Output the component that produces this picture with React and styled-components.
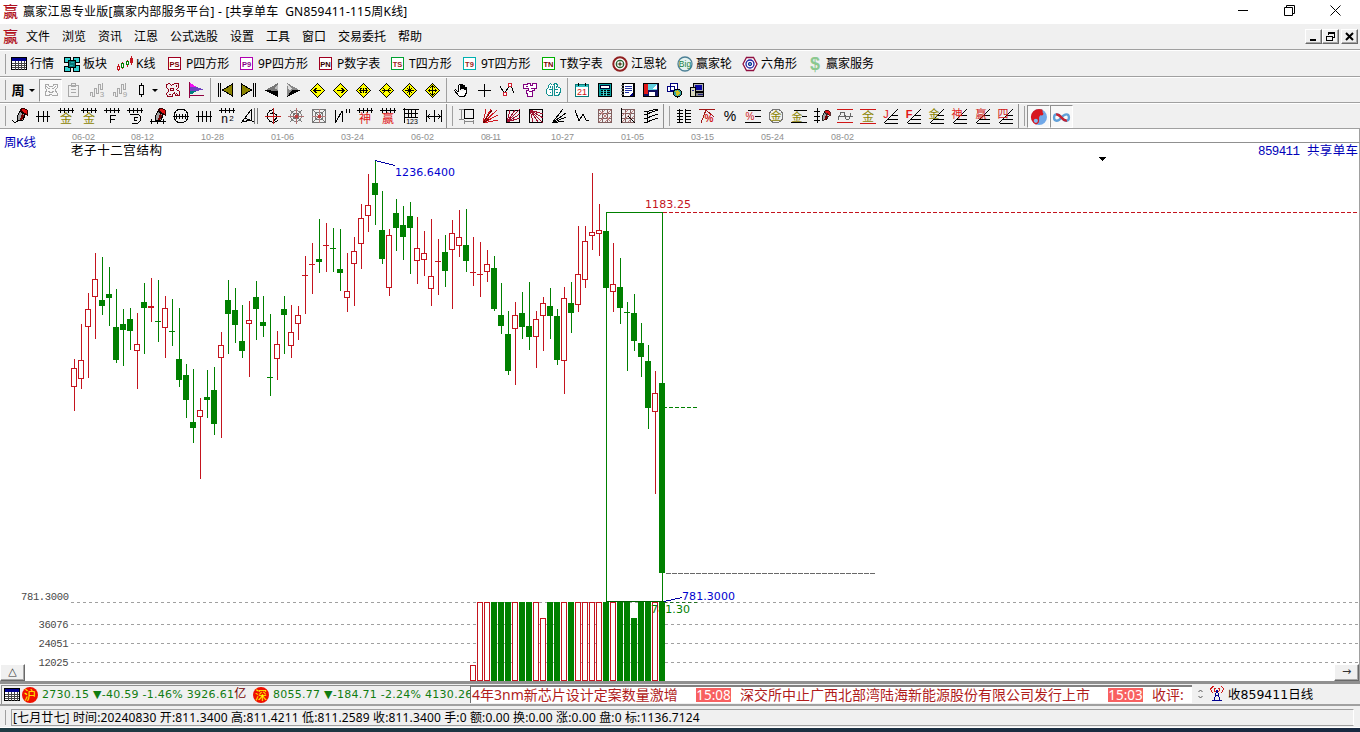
import React from "react";
import styled, { createGlobalStyle, css } from "styled-components";

//!데이터: [wickTop, wickBottom, bodyTop, bodyBottom, color]
const candles = [
  [359, 411, 368, 387, "r"], [324, 389, 360, 379, "r"], [293, 378, 309, 327, "r"],
  [253, 339, 279, 297, "r"], [257, 315, 300, 306, "g"], [267, 326, 294, 298, "g"],
  [289, 363, 327, 360, "g"], [309, 366, 324, 330, "g"], [308, 350, 319, 331, "g"],
  [313, 389, 344, 351, "r"], [283, 354, 302, 308, "g"], [278, 322, 306, 308, "r"],
  [280, 342, 321, 322, "g"], [296, 358, 308, 328, "r"], [299, 346, 331, 332, "g"],
  [308, 387, 359, 380, "g"], [364, 418, 375, 400, "g"], [369, 443, 422, 428, "g"],
  [398, 479, 410, 417, "r"], [370, 418, 397, 400, "g"], [367, 435, 390, 424, "g"],
  [332, 438, 345, 358, "r"], [280, 354, 300, 314, "g"], [288, 343, 310, 325, "g"],
  [305, 358, 341, 351, "g"], [301, 377, 320, 324, "r"], [281, 340, 297, 309, "g"],
  [296, 337, 322, 326, "g"], [314, 396, 377, 378, "g"], [331, 380, 344, 359, "r"],
  [296, 354, 309, 315, "g"], [305, 358, 332, 346, "r"], [306, 340, 315, 324, "r"],
  [256, 314, 275, 276, "r"], [243, 294, 264, 265, "r"], [219, 273, 259, 262, "g"],
  [223, 272, 245, 246, "r"], [228, 272, 248, 249, "g"], [229, 291, 269, 273, "g"],
  [253, 312, 291, 298, "r"], [237, 306, 251, 264, "r"], [204, 269, 218, 244, "r"],
  [174, 232, 205, 216, "r"], [160, 225, 183, 195, "g"], [191, 264, 230, 259, "g"],
  [229, 296, 235, 288, "r"], [199, 251, 213, 228, "g"], [206, 260, 225, 237, "g"],
  [202, 274, 216, 228, "g"], [217, 284, 248, 261, "r"], [231, 276, 253, 260, "r"],
  [219, 306, 276, 289, "r"], [239, 295, 261, 262, "r"], [235, 287, 252, 271, "g"],
  [220, 309, 233, 250, "r"], [210, 257, 237, 246, "r"], [209, 272, 245, 261, "g"],
  [237, 286, 272, 273, "r"], [242, 297, 274, 275, "r"], [250, 282, 264, 272, "r"],
  [256, 311, 268, 309, "g"], [283, 334, 315, 326, "g"], [311, 375, 334, 371, "g"],
  [302, 385, 315, 329, "r"], [292, 339, 313, 327, "g"], [282, 350, 326, 337, "g"],
  [311, 368, 319, 337, "r"], [297, 351, 303, 316, "r"], [288, 339, 306, 316, "g"],
  [309, 365, 316, 360, "g"], [287, 394, 298, 361, "r"], [282, 333, 303, 313, "g"],
  [226, 312, 274, 305, "r"], [226, 288, 241, 280, "r"], [173, 250, 232, 236, "r"],
  [204, 256, 230, 234, "r"], [231, 288, 231, 288, "g"], [243, 312, 284, 292, "r"],
  [258, 324, 287, 308, "g"], [302, 371, 312, 313, "g"], [294, 351, 313, 341, "g"],
  [323, 377, 343, 357, "g"], [345, 429, 361, 408, "g"], [371, 494, 393, 412, "r"],
  [383, 573, 383, 573, "g"],
];

const volumeColors = "rrrgggrggrrggrgrrrrgrgggggrg".split("");
const volumeTops = { 0: 665, 10: 618, 23: 618 };

const dates = [
  [72, "06-02"], [131, "08-12"], [201, "10-28"], [271, "01-06"], [341, "03-24"],
  [411, "06-02"], [481, "08-11"], [551, "10-27"], [621, "01-05"], [691, "03-15"],
  [761, "05-24"], [831, "08-02"],
];

const menus = [
  ["文件", 36], ["浏览", 36], ["资讯", 36], ["江恩", 36], ["公式选股", 60],
  ["设置", 36], ["工具", 36], ["窗口", 36], ["交易委托", 60], ["帮助", 36],
];

const RED = "#c4141e";
const GREEN = "#008000";
const OLIVE = "#8c8400";

//!아이콘 조각
const P = ({ d, c = "#000", f = "none", w = 1 }) => (
  <path d={d} stroke={c} fill={f} strokeWidth={w} />
);
const T = ({ x = 8, y = 15, s = 10, c = "#000", b, children }) => (
  <text
    x={x}
    y={y}
    fontSize={s}
    fill={c}
    textAnchor="middle"
    fontWeight={b ? 700 : 400}
    fontFamily='"Liberation Sans", "Noto Sans CJK SC", sans-serif'
  >
    {children}
  </text>
);

const Ladder = () => <P d="M0 2.5H16M2.5 0V5M6.5 0V5M10.5 0V5M14.5 0V5" />;
const Fan = () => <P d="M2 15.5H15M5 11.5H15M9 7.5H15M1 15L15 1" />;
const Diamond = ({ d }) => (
  <>
    <path d="M8.5 1.5L15.5 8.5L8.5 15.5L1.5 8.5Z" fill="#ff0" stroke="#000" />
    <P d={d} />
  </>
);
const Letters = ({ c, tc, children }) => (
  <>
    <rect x="1.5" y="1.5" width="12" height="12" fill="#fff" stroke={c} />
    <T x={7.5} y={10.5} s={7.5} c={tc} b>
      {children}
    </T>
  </>
);
const Brush = () => (
  <>
    <path d="M8 2L11 0L15 2L15 7L12 5Z" fill="#e01010" stroke="#300" />
    <path d="M8 3L13 7L11 12L5 13L5 9Z" fill="#a0a0a0" stroke="#000" />
    <path d="M10 5L12 8L10 12L8 12Z" fill="#700" />
  </>
);

const icons = {
  table: (
    <>
      <rect x="0.5" y="1.5" width="15" height="12" fill="#fff" stroke="#000" />
      <rect x="1" y="2" width="14" height="3" fill="#000090" />
      <P d="M1 7.5H15M1 9.5H15M1 11.5H15M4.5 5V14M7.5 5V14M10.5 5V14M13.5 5V14" c="#444" />
    </>
  ),
  blocks: (
    <>
      <P d="M0.5 1.5H6.5V6.5H0.5ZM9.5 1.5H15.5V6.5H9.5ZM0.5 10.5H6.5V15.5H0.5ZM9.5 9.5H15.5V15.5H9.5Z" f="#30d0d0" />
      <P d="M4.5 4.5H11.5V11.5H4.5Z" f="#087878" />
      <P d="M7 6.5H10M6 9.5H9" c="#20b0b0" />
    </>
  ),
  kline: (
    <>
      <P d="M1.5 8V15M5.5 6V13M10.5 4V11" c={RED} />
      <P d="M0.5 10.5H2.5V13.5H0.5ZM14.5 0V9M13.5 2.5H15.5V6.5H13.5Z" c={RED} f="#fff" />
      <P d="M4.5 7.5H6.5V11.5H4.5ZM9.5 5.5H11.5V8.5H9.5Z" c={GREEN} f="#fff" />
    </>
  ),
  ps: <Letters c="#a00020" tc="#700">PS</Letters>,
  p9: <Letters c="#b000b0" tc="#808">P9</Letters>,
  pn: <Letters c="#a00020" tc="#300">PN</Letters>,
  ts: <Letters c="#00a030" tc="#a02020">TS</Letters>,
  t9: <Letters c="#00b0b0" tc="#a02020">T9</Letters>,
  tn: <Letters c="#00b000" tc="#700">TN</Letters>,
  wheel: (
    <g shapeRendering="auto">
      <circle cx="8" cy="8" r="6.7" fill="#fff" stroke="#902020" strokeWidth="2" />
      <circle cx="8" cy="8" r="3.7" fill="#fff" stroke="#286030" strokeWidth="1.3" />
      <circle cx="8" cy="8" r="1.5" fill="#a03030" />
      <P d="M8 4V12M4 8H12" c="#286030" w={0.6} />
    </g>
  ),
  big: (
    <g shapeRendering="auto">
      <circle cx="8" cy="8" r="7" fill="#e4f2f0" stroke="#4c8096" strokeWidth="1.3" />
      <T y={11} s={8.5} c="#208040">Big</T>
    </g>
  ),
  hex: (
    <g shapeRendering="auto">
      <path d="M4.5 1.5H11.5L15 8L11.5 14.5H4.5L1 8Z" fill="#fff" stroke="#901040" strokeWidth="1.3" />
      <circle cx="8" cy="8" r="4" fill="none" stroke="#2020a0" strokeWidth="1.3" />
      <circle cx="8" cy="8" r="1.7" fill="#50b0b0" stroke="#2020a0" />
    </g>
  ),
  dollar: <T y={14} s={18} c="#8cc890" b>$</T>,
  week: <T y={13} s={13} b>周</T>,
  mask: <P c="#a8a8a8" d="M2 2.5H5L6 4H10L11 2.5H14V6L12 8L14 11V13.5H10L8 12L6 13.5H2V11L4 8L2 6ZM5 6.5H7M9 6.5H11M5 9L8 11L11 9M3 4L6 7M13 4L10 7" />,
  clip: <P c="#a8a8a8" d="M2.5 3.5H12.5V14.5H2.5ZM5.5 1.5H9.5V4.5H5.5ZM5 7.5H10M5 10.5H10" />,
  zig3: (
    <>
      <P c="#a8a8a8" d="M1.5 14V10.5H3.5V14H5.5V6.5H7.5V11H9.5V2.5H11.5V7.5H13.5V1" />
      <T x={13} y={15} s={8} c="#a0a0a0">3</T>
    </>
  ),
  zig9: (
    <>
      <P c="#a8a8a8" d="M1.5 14V10.5H3.5V14H5.5V6.5H7.5V11H9.5V2.5H11.5V7.5H13.5V1" />
      <T x={13} y={15} s={8} c="#a0a0a0">9</T>
    </>
  ),
  candle: <P d="M8.5 1V4M8.5 12V15M6.5 3.5H10.5V12.5H6.5Z" />,
  maze: <P c="#900018" d="M1.5 2.5L4.5 1.5L6.5 3.5L9.5 1.5H13.5V5.5L11.5 7.5L14.5 9.5V13.5H10.5L9.5 10.5L7.5 12.5V14.5H2.5L1.5 11.5L3.5 9.5V7.5L1.5 5.5ZM5.5 6.5H8.5V8.5H5.5ZM11.5 3V5M4 12H6M11 11L13 13" />,
  flag: (
    <>
      <path d="M2 1L9 5H2Z" fill="#f010f0" />
      <path d="M2 5H9L15 7.5L9 9H2Z" fill="#7040c0" />
      <path d="M2 9H9L4 12H2Z" fill="#008080" />
      <P d="M1.5 0V16M1 13.5H16" c="#900040" />
    </>
  ),
  first: <P d="M1.5 1V15M3.5 1V15M15.5 2V14L5.5 8Z" f={OLIVE} />,
  last: <P d="M15.5 1V15M13.5 1V15M1.5 2V14L11.5 8Z" f={OLIVE} />,
  prev: (
    <>
      <path d="M15 1V15L9 9H1Z" fill="#777" />
      <path d="M15 15V9L1 8Z" fill="#000" />
      <path d="M11 6L15 2V8Z" fill="#bbb" />
    </>
  ),
  next: (
    <>
      <path d="M1 1V15L7 9H15Z" fill="#888" />
      <path d="M1 15L6 8H15Z" fill="#000" />
      <path d="M1 2L7 7L3 8Z" fill="#ddd" />
    </>
  ),
  dLeft: <Diamond d="M5 8.5H12M7.5 6L5 8.5L7.5 11" />,
  dRight: <Diamond d="M5 8.5H12M9.5 6L12 8.5L9.5 11" />,
  dWide: <Diamond d="M4 8.5H13M6.5 6L4.5 8.5L6.5 11M10.5 6L12.5 8.5L10.5 11M8.5 6V11" />,
  dNarrow: <Diamond d="M4 8.5H13M5 6L7.5 8.5L5 11M12 6L9.5 8.5L12 11" />,
  dStar: <Diamond d="M4 8.5H13M8.5 4V13M6 6L11 11M11 6L6 11" />,
  dCross: <Diamond d="M4 8.5H13M8.5 3V14M6 6L8.5 4L11 6M6 11L8.5 13L11 11M5.5 7V10M11.5 7V10" />,
  hand: <P d="M5.5 10L2.5 7.5L1.5 8.5L6.5 14.5H11.5L13.5 10.5V5.5H12.5V8M11.5 8V3.5H10.5V7M9.5 7V2.5H8.5V7M7.5 8V2.5H6.5L5.5 4V10" f="#fff" />,
  cross: <P d="M8.5 2V15M2 8.5H15" />,
  nodes: (
    <>
      <P d="M1 4L5 11M6 11L10 4M12 4L15 11" />
      <P d="M4.5 10.5H7.5V13.5H4.5ZM9.5 1.5H12.5V4.5H9.5Z" c="#d02030" f="#fff" />
    </>
  ),
  shirt: <P c="#800080" d="M1.5 2.5H5.5V1.5H8.5V3.5H10.5V1.5H14.5V6.5H12.5V8.5H10.5V14.5H5.5V11.5H4.5V8.5H6.5V6.5H1.5ZM4 4.5H6M9 6.5H13M7 9.5H10" f="#fff" />,
  brain: <P c="#109090" d="M7.5 3.5L5.5 1.5L3.5 3.5V5.5L1.5 7.5V11.5L3.5 13.5H7.5V3.5M8.5 2.5L10.5 1.5L12.5 2.5V4.5L15.5 6.5V9.5L14.5 11.5L13.5 13.5H9.5V2.5M4 7.5H7M10 7.5H13M4.5 10.5H6M11 10.5H13M5.5 4V6M11.5 4V6" f="#fff" />,
  calendar: (
    <>
      <rect x="1.5" y="2.5" width="13" height="12" fill="#fff" stroke="#087878" />
      <rect x="2" y="3" width="12" height="2" fill="#30c0c0" />
      <P d="M4.5 1V4M11.5 1V4" />
      <T y={13} s={9} c="#d01010">21</T>
    </>
  ),
  calculator: (
    <>
      <rect x="1.5" y="1.5" width="13" height="13" fill="#08a0a0" stroke="#000" />
      <rect x="3.5" y="3.5" width="9" height="3" fill="#fff" stroke="#003" />
      <P d="M4 8.5H13M4 10.5H13M4 12.5H13" />
      <P d="M6.5 8V14M9.5 8V14" c="#60d8d8" />
    </>
  ),
  notebook: (
    <>
      <rect x="2" y="1" width="13" height="14" fill="#000" />
      <rect x="4" y="2" width="9" height="12" fill="#fff" />
      <P d="M5 4.5H12M5 6.5H12M5 8.5H12M5 10.5H9" c="#2030a0" />
      <P d="M1 3.5H4M1 6.5H4M1 9.5H4M1 12.5H4" c="#777" />
      <path d="M9 14L13 10V14Z" fill="#000080" />
    </>
  ),
  disk: (
    <>
      <rect x="0.5" y="1.5" width="15" height="13" fill="#101060" stroke="#000" />
      <rect x="1" y="2" width="4" height="10" fill="#e01818" />
      <rect x="5" y="2" width="9" height="6" fill="#60d0e0" />
      <path d="M9 7L14 2V7Z" fill="#fff" />
      <rect x="6" y="10" width="6" height="4" fill="#fff" />
    </>
  ),
  globe: (
    <>
      <P d="M4.5 1.5H11.5V8.5H4.5ZM1.5 4.5H8.5V9.5H1.5Z" c="#000080" f="#fff" />
      <circle cx="11.5" cy="11" r="4" fill="#30a0a0" stroke="#000" />
      <path d="M9 9L12 8L14 11L11 14Z" fill="#d0c020" />
    </>
  ),
  pc: (
    <>
      <rect x="4.5" y="1.5" width="10" height="8" fill="#b0b0b0" stroke="#000" />
      <rect x="6" y="3" width="7" height="5" fill="#0808a0" />
      <P d="M1.5 5.5H6.5V14.5H1.5Z" f="#d8d8c0" />
      <P d="M6.5 10.5H14.5V14.5H6.5Z" f="#888" />
      <P d="M3 8.5H5M9 12.5H14" c="#202080" />
    </>
  ),
  brush: (
    <>
      <Brush />
      <P d="M0 12L3 15L7 12" />
    </>
  ),
  rail: <P d="M1 8.5H15M3.5 3V14M8.5 3V14M12.5 3V14" />,
  gold: (
    <>
      <Ladder />
      <T c={OLIVE} s={12}>金</T>
    </>
  ),
  railF: (
    <>
      <Ladder />
      <P d="M6.5 15V7.5H12M6.5 11.5H11" />
    </>
  ),
  spiral: (
    <>
      <Ladder />
      <P d="M3 6.5H11.5L13.5 8.5V12.5L10.5 15.5H5M10.5 9.5H8L7.5 12.5H10" />
    </>
  ),
  brushRail: (
    <>
      <Brush />
      <P d="M0 13.5H16M1.5 11V16M7.5 12V16M13.5 11V16" />
    </>
  ),
  roundRail: (
    <>
      <circle cx="8" cy="8" r="7" fill="none" stroke="#000" />
      <P d="M0 8.5H16M3.5 6V11M6.5 6V11M9.5 6V11M12.5 6V11" />
    </>
  ),
  rail4: <P d="M0 8.5H16M2.5 3V14M6.5 3V14M10.5 3V14M14.5 3V14" />,
  n2: (
    <>
      <Ladder />
      <T x={5.5} y={15} s={12}>n</T>
      <T x={12.5} y={13} s={8}>2</T>
    </>
  ),
  prism: (
    <>
      <P d="M0 14L9 2V12ZM3 10L12 14" />
      <P d="M12.5 0V16M15.5 0V16" c="#777" />
    </>
  ),
  target: (
    <>
      <P d="M8 1.5L4.5 3L2.5 6V10L5 13.5L9 14.5L13 12.5M5.5 6L8.5 4.5L11.5 7V10L9 12.5" />
      <P d="M0 8.5H16M8.5 0V16" c="#c01818" />
    </>
  ),
  web: (
    <>
      <circle cx="8" cy="8" r="5.5" fill="none" stroke="#888" />
      <circle cx="8" cy="8" r="3" fill="none" stroke="#707070" />
      <P d="M2 2L14 14M14 2L2 14" c="#777" />
      <P d="M0 8.5H16M8.5 0V16" c="#b07070" />
      <circle cx="8.5" cy="8.5" r="1.5" fill="#c04040" />
    </>
  ),
  webBox: (
    <>
      <P d="M1.5 1.5H14.5V14.5H1.5ZM4.5 4.5H11.5V11.5H4.5ZM2 2L14 14M14 2L2 14" c="#777" />
      <P d="M1 8.5H15M8.5 1V15" c="#b08080" />
      <circle cx="8.5" cy="8.5" r="1.5" fill="#c04040" />
    </>
  ),
  quoteN: <P d="M1.5 2V15M2 14L8 3M8.5 3V14M12.5 1V5M15.5 1V5" />,
  god: (
    <>
      <Ladder />
      <T c="#e01818" s={12}>神</T>
    </>
  ),
  win: (
    <>
      <Ladder />
      <T c="#e01818" s={12}>赢</T>
    </>
  ),
  ruler: (
    <>
      <P d="M1.5 0V15M0 1.5H16M2 5.5H15M2 9.5H15M5.5 2V9M8.5 2V9M12.5 2V9" />
      <T x={9} y={16} s={7}>123</T>
    </>
  ),
  span: <P d="M0.5 2V14M8.5 2V14M15.5 2V14M1 8.5H15M4 6L1.5 8.5L4 11M12 6L14.5 8.5L12 11" />,
  dims: (
    <>
      <P d="M5.5 1.5H14.5V10.5H5.5Z" />
      <P d="M2.5 1V12M0 1.5H5M0 11.5H5M5 13.5H15M5.5 12V16M14.5 12V16" c="#888" />
    </>
  ),
  rays: (
    <>
      <P d="M1 15L4 1M1 15L9 1M1 15L15 2M1 15L16 7M1 15L16 12" c="#d01820" />
      <P d="M1 15L10 2M1 15L7 11" c="#700" />
    </>
  ),
  raysBox: (
    <>
      <P d="M1.5 2.5H14.5V14.5H1.5Z" />
      <P d="M2 14L5 2M2 14L10 2M2 14L15 1M2 14L15 6M2 14L15 10" c="#a01030" />
    </>
  ),
  raysBox2: (
    <>
      <P d="M1.5 1.5H14.5V14.5H1.5Z" />
      <P d="M2 2L5 14M2 2L10 14M2 2L15 15M2 2L15 10M2 2L15 6" c="#a01030" />
    </>
  ),
  raysBlack: <P d="M1 15L12 1M1 15L15 5M1 15L15 9M1 15L13 13" />,
  vee: <P d="M1 2L5 13L9 6L12 12L15 13" />,
  gridX: (
    <>
      <P d="M1.5 1.5H14.5V14.5H1.5ZM5.5 2V14M10.5 2V14M2 5.5H14M2 10.5H14" c="#806060" />
      <P d="M2 14L14 2M2 2L14 14M2 8L8 2M8 14L14 8" c="#c08080" />
    </>
  ),
  gridX2: (
    <>
      <P d="M1.5 1.5H14.5V14.5H1.5ZM5.5 2V14M10.5 2V14M2 5.5H14M2 10.5H14" c="#806060" />
      <P d="M2 14L14 2M2 8L8 2M8 14L14 8" c="#c08080" />
      <P d="M1.5 0V15M8 8L15 15" />
    </>
  ),
  lanes: <P d="M1 7L15 2M1 11L15 6M1 15L15 10M4.5 3V15M1 4L15 1" />,
  columns: <P d="M3.5 1V15M1 2.5H7M1 5.5H7M1 8.5H7M1 11.5H7M1 14.5H7M9.5 1V15M10 2.5H15M10 5.5H15M10 8.5H15M10 11.5H15M10 14.5H15" />,
  pctTop: (
    <>
      <P d="M0 1.5H16M2 15L7 2L15 9" c="#a01818" />
      <T x={10} y={14} s={10} c="#d01818" b>%</T>
    </>
  ),
  pct: <T y={13} s={14}>%</T>,
  pctLines: (
    <>
      <P d="M3 2.5H16M10 8.5H16M0 14.5H16" />
      <T x={5} y={12} s={10} c="#d01818">%</T>
    </>
  ),
  goldRound: (
    <>
      <circle cx="8" cy="8" r="7" fill="none" stroke="#777" />
      <T y={12} s={11.5} c={OLIVE}>金</T>
    </>
  ),
  goldLines: (
    <>
      <P d="M3 2.5H16M11 8.5H16M0 14.5H16" />
      <T x={6} y={13} s={11} c={OLIVE}>金</T>
    </>
  ),
  levelBrush: (
    <>
      <g transform="translate(4 2) scale(.8)"><Brush /></g>
      <P d="M3.5 0V15M0 3.5H6M0 8.5H6M0 12.5H6" />
    </>
  ),
  wave: (
    <>
      <P d="M0 1.5H16M0 14.5H16" c="#d01818" />
      <P d="M1 12L4 4L7 4L9 11L12 11L14 5M1 8.5H16" c="#666" />
    </>
  ),
  goldBand: (
    <>
      <P d="M0 1.5H16M0 15.5H16" c="#d01818" />
      <T y={13} s={12} c={OLIVE}>金</T>
    </>
  ),
  fanJ: (<><Fan /><T x={3} y={10} s={11} c="#e01818">J</T></>),
  fanF: (<><Fan /><T x={3} y={10} s={11} c="#e01818" b>F</T></>),
  fanGold: (<><Fan /><T x={5} y={10} s={11} c={OLIVE}>金</T></>),
  fanGod: (<><Fan /><T x={5} y={10} s={11} c="#e01818">神</T></>),
  fanWin: (<><Fan /><T x={6} y={10} s={11} c="#d01818">赢</T></>),
  fanFour: (<><Fan /><T x={5} y={10} s={11} c="#d01818">四</T></>),
  taiji: (
    <g shapeRendering="auto">
      <circle cx="8.5" cy="8.5" r="7.5" fill="#70a8e8" />
      <path d="M11.5 1.5A7.5 7.5 0 1 0 5.5 15.5C9.5 14.5 8.5 11.5 8.5 9.5C8.5 6.5 13.5 6.5 11.5 1.5Z" fill="#d81820" />
      <circle cx="5.5" cy="12" r="2" fill="#80b8f0" />
      <circle cx="11" cy="5.5" r="1.6" fill="#d81820" />
    </g>
  ),
  infinity: (
    <g shapeRendering="auto">
      <path d="M8 9C5 5 1 5 1 9C1 13 5 13 8 9" fill="none" stroke="#60a0d8" strokeWidth="2.2" />
      <path d="M8 9C11 5 15 5 15 9C15 13 11 13 8 9" fill="none" stroke="#60a0d8" strokeWidth="2.2" />
      <path d="M3 6.3C7 5 9 13 13 11.7" fill="none" stroke="#c82030" strokeWidth="2.4" />
    </g>
  ),
  antenna: (
    <>
      <P d="M4.5 0L1.5 3L3.5 7M12.5 0L14.5 3L12.5 7M6.5 2L5 4L6.5 6M9.5 2L11 4L9.5 6" c="#d01818" />
      <P d="M8 4L5 14M8 4L11 14M6 9.5H10M3 14.5H13" c="#000090" />
    </>
  ),
};

const Icon = ({ name, size = 16 }) => (
  <IconSvg width={size} height={size} viewBox="0 0 16 16" shapeRendering="crispEdges">
    {icons[name]}
  </IconSvg>
);

//!툴바
const quickItems = [
  ["table", "行情", 53], ["blocks", "板块", 53], ["kline", "K线", 50],
  ["ps", "P四方形", 72], ["p9", "9P四方形", 79], ["pn", "P数字表", 72],
  ["ts", "T四方形", 72], ["t9", "9T四方形", 79], ["tn", "T数字表", 71],
  ["wheel", "江恩轮", 65], ["big", "赢家轮", 65], ["hex", "六角形", 65],
  ["dollar", "赢家服务", 80],
];
const navIcons = "first last prev next dLeft dRight dWide dNarrow dStar dCross".split(" ");
const handIcons = "hand cross nodes shirt brain".split(" ");
const appIcons = "calendar calculator notebook disk globe pc".split(" ");
const drawA =
  "brush rail gold gold railF spiral brushRail roundRail rail4 n2 prism target web webBox quoteN god win ruler span".split(" ");
const drawB = "dims rays raysBox raysBox2 raysBlack vee gridX gridX2 lanes".split(" ");
const drawC =
  "columns pctTop pct pctLines goldRound goldLines levelBrush wave goldBand fanJ fanF fanGold fanGod fanWin fanFour".split(" ");

const Cells = ({ names }) =>
  names.map((name, idx) => (
    <Cell key={idx}>
      <Icon name={name} />
    </Cell>
  ));

const Toolbars = () => (
  <>
    <Toolbar $h={27}>
      <Grip />
      {quickItems.map(([icon, label, w]) => (
        <QuickItem key={label} $w={w}>
          <Icon name={icon} />
          <QuickLabel>{label}</QuickLabel>
        </QuickItem>
      ))}
    </Toolbar>
    <Toolbar $h={26}>
      <Grip />
      <DropCell $w={31}>
        <Icon name="week" />
        <Caret />
      </DropCell>
      <Cell $pressed>
        <Icon name="mask" />
      </Cell>
      <Cells names={["clip", "zig3", "zig9"]} />
      <DropCell $w={30}>
        <Icon name="candle" />
        <Caret />
      </DropCell>
      <Cells names={["maze", "flag"]} />
      <Divider />
      <Cells names={navIcons} />
      <Divider />
      <Cells names={handIcons} />
      <Divider />
      <Cells names={appIcons} />
    </Toolbar>
    <Toolbar $h={26}>
      <Grip />
      <Cells names={drawA} />
      <BandEnd />
      <Grip />
      <Cells names={drawB} />
      <BandEnd />
      <Grip />
      <Cells names={drawC} />
      <BandEnd />
      <Grip />
      <Cell $pressed>
        <Icon name="taiji" size={17} />
      </Cell>
      <Cell $pressed>
        <Icon name="infinity" size={17} />
      </Cell>
    </Toolbar>
  </>
);

//!차트
const Bar = ({ x, top, bottom, color }) => {
  if (color === "g" || bottom - top < 3) {
    return (
      <rect x={x - 3} y={top} width={6} height={bottom - top} fill={color === "g" ? GREEN : RED} />
    );
  }
  return (
    <rect x={x - 2.5} y={top + 0.5} width={5} height={bottom - top - 1} fill="#fff" stroke={RED} />
  );
};

const Chart = () => (
  <ChartSvg width="1360" height="552" viewBox="0 129 1360 552" shapeRendering="crispEdges">
    <path d="M71 142.5H1360" stroke="#909090" />
    {dates.map(([x, label]) => (
      <DateText key={x} x={x} y={140} textLength={label === "08-11" ? 20 : 23}>
        {label}
      </DateText>
    ))}
    <SongText x={4} y={147} fill="#0000b8" textLength={32}>周K线</SongText>
    <SongText x={71} y={155} fill="#000" textLength={91}>老子十二宫结构</SongText>
    <SongText x={1258} y={155} fill="#0000b8" textLength={42}>859411</SongText>
    <SongText x={1307} y={155} fill="#0000b8" textLength={51}>共享单车</SongText>
    <path d="M1098 157H1107L1102.5 161Z" fill="#000" />

    {[602.5, 624.5, 643.5, 662.5].map((y) => (
      <path key={y} d={`M71 ${y}H1359`} stroke="#a0a0a0" strokeDasharray="3 3" />
    ))}
    <AxisText x={21} y={600} textLength={48}>781.3000</AxisText>
    <AxisText x={38.5} y={628} textLength={30}>36076</AxisText>
    <AxisText x={38.5} y={647} textLength={30}>24051</AxisText>
    <AxisText x={38.5} y={666} textLength={30}>12025</AxisText>

    {candles.map(([t, b, bt, bb, color], i) => {
      const x = 74 + i * 7;
      return (
        <g key={i}>
          <rect x={x} y={t} width={1} height={b - t} fill={color === "g" ? GREEN : RED} />
          <Bar x={x} top={bt} bottom={bb} color={color} />
        </g>
      );
    })}
    {volumeColors.map((color, i) => (
      <Bar key={i} x={473 + i * 7} top={volumeTops[i] || 602} bottom={681} color={color} />
    ))}

    <path d="M606.5 601V212.5H662.5V601" stroke={GREEN} fill="none" />
    <path d="M606 601.5H664" stroke="#006000" />
    <path d="M664 602.5H698" stroke="#207020" strokeDasharray="3 3" />
    <path d="M663 212.5H1359" stroke={RED} strokeDasharray="4 2" />
    <path d="M663 407.5H697" stroke={GREEN} strokeDasharray="4 2" />
    <path d="M666 573.5H875" stroke="#686868" strokeDasharray="5 1" />
    <path d="M375 160.5L395 165.5M664 601.5L682 597.5" stroke="#0000a0" />
    <PriceText x={395} y={176} fill="#0000d0" textLength={60}>1236.6400</PriceText>
    <PriceText x={645} y={208} fill={RED} textLength={46}>1183.25</PriceText>
    <PriceText x={682} y={600} fill="#0000d0" textLength={53}>781.3000</PriceText>
    <PriceText x={651} y={613} fill={GREEN} textLength={39}>781.30</PriceText>
  </ChartSvg>
);

const Index = ({ badge, value, diff, percent, amount, unit }) => (
  <>
    <Badge>{badge}</Badge>
    <IndexText>
      {value} ▼{diff} {percent} {amount}
      <Unit>{unit}</Unit>
    </IndexText>
  </>
);

const App = () => {
  return (
    <Window>
      <GlobalStyle />
      <TitleBar>
        <Logo>赢</Logo>
        <Title>赢家江恩专业版[赢家内部服务平台] - [共享单车&nbsp; GN859411-115周K线]</Title>
        <WindowButtons>
          <svg width="11" height="11"><path d="M0 5.5H10" stroke="#000" /></svg>
          <svg width="11" height="11" fill="none" stroke="#000">
            <path d="M0.5 2.5H8.5V10.5H0.5ZM2.5 2V0.5H10.5V8.5H9" />
          </svg>
          <svg width="11" height="11" stroke="#000"><path d="M0.5 0.5L10.5 10.5M10.5 0.5L0.5 10.5" /></svg>
        </WindowButtons>
      </TitleBar>
      <MenuBar>
        <Logo>赢</Logo>
        <MenuList>
          {menus.map(([name, w]) => (
            <MenuItem key={name} $w={w}>{name}</MenuItem>
          ))}
        </MenuList>
        <MdiButtons>
          <MdiButton>
            <svg width="11" height="9"><path d="M2 8H8" stroke="#000" strokeWidth="2" /></svg>
          </MdiButton>
          <MdiButton $gap>
            <svg width="11" height="9" fill="none" stroke="#000" shapeRendering="crispEdges">
              <path d="M3 1H9.5V5.5H7.5M3.5 1V3M3 0.5H10M1 4H7.5V8.5H1.5V4" />
            </svg>
          </MdiButton>
          <MdiButton>
            <svg width="11" height="9"><path d="M2 1L9 8M9 1L2 8" stroke="#000" strokeWidth="2" /></svg>
          </MdiButton>
        </MdiButtons>
      </MenuBar>
      <Toolbars />
      <ChartPane>
        <Chart />
        <CornerButton>△</CornerButton>
        <CornerButton $right>→</CornerButton>
      </ChartPane>
      <TickerBar>
        <IndexPanel>
          <Icon name="table" />
          <Index badge="沪" value="2730.15" diff="-40.59" percent="-1.46%" amount="3926.61" unit="亿" />
          <Index badge="深" value="8055.77" diff="-184.71" percent="-2.24%" amount="4130.26" />
        </IndexPanel>
        <News>
          <NewsText $w={224}>4年3nm新芯片设计定案数量激增</NewsText>
          <NewsTime>15:08</NewsTime>
          <NewsText $w={368}>深交所中止广西北部湾陆海新能源股份有限公司发行上市</NewsText>
          <NewsTime>15:03</NewsTime>
          <NewsText $w={38}>收评:</NewsText>
        </News>
        <Spinner>
          <svg width="5" height="10" fill="none" stroke="#555"><path d="M0.5 3L2.5 1L4.5 3M0.5 7L2.5 9L4.5 7" /></svg>
        </Spinner>
        <Icon name="antenna" />
        <Receive>
          收<Digits>859411</Digits>日线
        </Receive>
      </TickerBar>
      <StatusBar>
        <Grip />
        <StatusPanel>
          [七月廿七] 时间:20240830 开:811.3400 高:811.4211 低:811.2589 收:811.3400 手:0 额:0.00 换:0.00 涨:0.00 盘:0 标:1136.7124
        </StatusPanel>
      </StatusBar>
      <Desktop />
    </Window>
  );
};
export default App;

const GlobalStyle = createGlobalStyle`
  * {
    box-sizing: border-box;
  }
  body {
    margin: 0;
    overflow: hidden;
    font-family: "Noto Sans", "Noto Sans CJK SC", sans-serif;
    font-size: 12px;
    color: #000;
  }
`;
const Window = styled.div`
  width: 1360px;
  height: 732px;
  display: flex;
  flex-direction: column;
  background: #f0f0f0;
  white-space: nowrap;
`;
const TitleBar = styled.div`
  height: 24px;
  display: flex;
  align-items: center;
  padding-left: 3px;
  background: #fff;
`;
const Logo = styled.span`
  width: 20px;
  padding-bottom: 2px;
  font: 500 15px/20px "Noto Sans CJK SC", sans-serif;
  color: #b01020;
`;
const Title = styled.span`
  flex: 1;
  line-height: 20px;
  letter-spacing: 0.22px;
`;
const WindowButtons = styled.div`
  display: flex;
  gap: 35px;
  padding: 0 19px 3px 0;
`;
const MenuBar = styled.div`
  height: 26px;
  display: flex;
  align-items: center;
  padding: 0 2px 0 3px;
  border-bottom: 1px solid #a0a0a0;
`;
const MenuList = styled.div`
  flex: 1;
  display: flex;
  padding-left: 3px;
`;
const MenuItem = styled.span`
  width: ${(props) => props.$w}px;
  line-height: 20px;
`;
const MdiButtons = styled.div`
  display: flex;
`;
const raised = css`
  border: 1px solid;
  border-color: #fff #696969 #696969 #fff;
  box-shadow: inset -1px -1px 0 #a8a8a8;
`;
const MdiButton = styled.div`
  width: 17px;
  height: 15px;
  display: flex;
  justify-content: center;
  align-items: center;
  margin-right: ${(props) => (props.$gap ? 2 : 0)}px;
  ${raised}
`;
const Toolbar = styled.div`
  height: ${(props) => props.$h}px;
  display: flex;
  align-items: center;
  border-top: 1px solid #fff;
  border-bottom: 1px solid #a0a0a0;
`;
const Grip = styled.div`
  width: 3px;
  height: 20px;
  flex: none;
  margin-left: 5px;
  border-left: 1px solid #a0a0a0;
`;
const Cell = styled.div`
  width: 23px;
  height: 23px;
  flex: none;
  display: flex;
  justify-content: center;
  align-items: center;
  ${(props) =>
    props.$pressed &&
    css`
      background: #f8f8f8;
      border: 1px solid;
      border-color: #909090 #fff #fff #909090;
    `}
`;
const DropCell = styled.div`
  width: ${(props) => props.$w}px;
  flex: none;
  display: flex;
  align-items: center;
  padding-left: 2px;
  gap: 3px;
`;
const Caret = styled.span`
  border: 3px solid transparent;
  border-top-color: #000;
  border-bottom: 0;
`;
const Divider = styled.div`
  width: 6px;
  height: 24px;
  flex: none;
  background: linear-gradient(#a0a0a0, #a0a0a0) 3px 0 / 1px 100% no-repeat;
`;
const BandEnd = styled.div`
  width: 2px;
  height: 24px;
  flex: none;
  border-right: 1px solid #909090;
`;
const IconSvg = styled.svg`
  display: block;
  flex: none;
  overflow: visible;
`;
const QuickItem = styled.div`
  width: ${(props) => props.$w}px;
  display: flex;
  align-items: center;
  padding-left: 3px;
  gap: 3px;
`;
const QuickLabel = styled.span`
  line-height: 20px;
`;
const ChartPane = styled.div`
  position: relative;
  height: 552px;
  flex: none;
  background: #fff;
  border-right: 1px solid #a0a0a0;
`;
const ChartSvg = styled.svg`
  display: block;
`;
const DateText = styled.text`
  font: 9px "Liberation Sans", sans-serif;
  fill: #909090;
`;
const SongText = styled.text`
  font: 12.5px "Liberation Mono", "Noto Sans CJK SC", monospace;
`;
const AxisText = styled.text`
  font: 10.5px "Liberation Mono", monospace;
  fill: #484848;
`;
const PriceText = styled.text`
  font: 11px "DejaVu Sans", sans-serif;
`;
const CornerButton = styled.div`
  position: absolute;
  bottom: 0;
  ${(props) => (props.$right ? "right: 0;" : "left: 0;")}
  width: 25px;
  height: 17px;
  font: 11px/14px "DejaVu Sans", sans-serif;
  text-align: center;
  color: #333;
  background: #f0f0f0;
  ${raised}
`;
const TickerBar = styled.div`
  height: 25px;
  flex: none;
  display: flex;
  align-items: center;
  border-top: 3px solid #909090;
  border-bottom: 2px solid #a0a0a0;
`;
const IndexPanel = styled.div`
  width: 469px;
  height: 19px;
  flex: none;
  display: flex;
  align-items: center;
  overflow: hidden;
  margin-left: 1px;
  padding-left: 2px;
  border-top: 1px solid #909090;
  border-left: 1px solid #909090;
`;
const Badge = styled.span`
  width: 16px;
  height: 16px;
  flex: none;
  margin: 0 4px 0 2px;
  border-radius: 50%;
  font: 12px/15px "Noto Sans CJK SC", sans-serif;
  text-align: center;
  color: #ff0;
  background: #f01000;
`;
const IndexText = styled.span`
  min-width: 209px;
  font: 11px/16px "DejaVu Sans", "Noto Sans CJK SC", sans-serif;
  letter-spacing: 0.26px;
  color: #107c10;
`;
const Unit = styled.span`
  font-size: 12px;
  letter-spacing: 0;
  color: #700000;
`;
const News = styled.div`
  width: 722px;
  height: 18px;
  flex: none;
  display: flex;
  align-items: center;
  overflow: hidden;
  padding-left: 1px;
  border-top: 2px solid #808080;
  border-left: 1px solid #707070;
  background: #fff;
`;
const NewsText = styled.span`
  width: ${(props) => props.$w}px;
  flex: none;
  font-size: 14px;
  line-height: 16px;
  color: #b01c1c;
`;
const NewsTime = styled.span`
  width: 35px;
  height: 14px;
  flex: none;
  margin-right: 9px;
  font-size: 13.5px;
  line-height: 14px;
  text-align: center;
  color: #fff;
  background: #f86060;
`;
const Spinner = styled.div`
  width: 17px;
  display: flex;
  justify-content: center;
`;
const Receive = styled.span`
  margin-left: 3px;
  font: 12.5px/18px "Noto Sans CJK SC", sans-serif;
`;
const Digits = styled.span`
  font: 12.5px "DejaVu Sans", sans-serif;
`;
const StatusBar = styled.div`
  height: 22px;
  flex: none;
  display: flex;
  align-items: center;
  padding: 2px 6px 0 0;
  border-bottom: 1px solid #fff;

  ${Grip} {
    height: 15px;
  }
`;
const StatusPanel = styled.div`
  flex: 1;
  height: 17px;
  margin-left: 3px;
  padding-left: 1px;
  line-height: 15px;
  letter-spacing: 0.135px;
  border: 1px solid;
  border-color: #a0a0a0 #fff #a0a0a0 #a0a0a0;
`;
const Desktop = styled.div`
  flex: 1;
  background: linear-gradient(90deg, #203c44, #182840);
`;
